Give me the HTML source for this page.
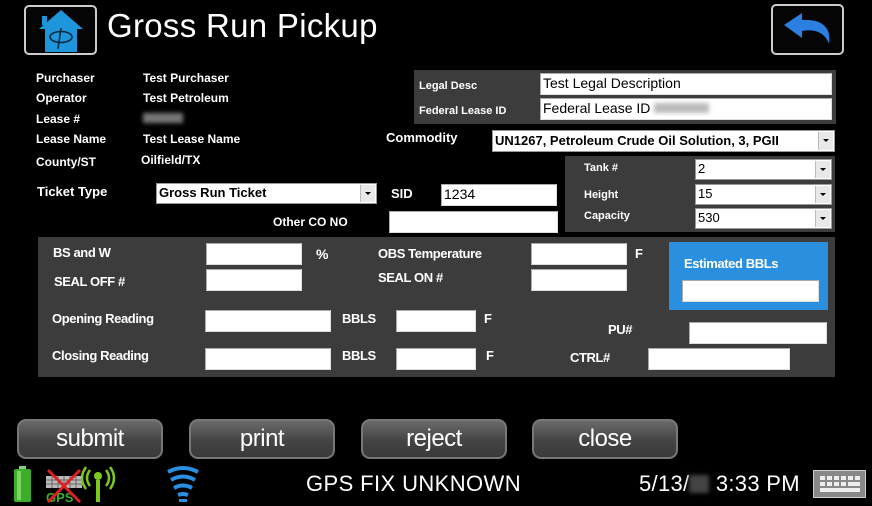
<!DOCTYPE html>
<html><head><meta charset="utf-8"><style>
*{margin:0;padding:0;box-sizing:border-box}
body{width:872px;height:506px;background:#000;position:relative;overflow:hidden;font-family:"Liberation Sans",Arial,sans-serif;color:#fff}
.a{position:absolute}
.l{position:absolute;font-weight:bold;font-size:12px;line-height:14px;white-space:nowrap}
.n{position:absolute;font-weight:bold;font-size:13px;line-height:15px;white-space:nowrap;letter-spacing:-0.4px}
.in{position:absolute;background:#fff;border:1px solid #aaa;border-right-color:#ddd;border-bottom-color:#ddd;color:#000;font-size:13px;line-height:19px;padding-left:2px;white-space:nowrap;overflow:hidden}
.sel{position:absolute;background:#fff;border:1px solid #999;color:#000;font-size:13px;line-height:18px;padding-left:2px;white-space:nowrap;overflow:hidden}
.sel:after{content:"";position:absolute;right:1px;top:1px;bottom:1px;width:14px;background:#e8e8e8;border-left:1px solid #bbb}
.sel i{position:absolute;right:5px;top:8px;width:0;height:0;border-left:3px solid transparent;border-right:3px solid transparent;border-top:3px solid #000;z-index:2}
.btn{position:absolute;top:419px;width:146px;height:40px;border-radius:9px;border:2px solid #777;background:linear-gradient(#6a6a6a,#444 55%,#3a3a3a);color:#fff;font-size:24px;text-align:center;line-height:36px;letter-spacing:-0.5px}
</style></head><body>
<!-- logo -->
<div class="a" style="left:24px;top:5px;width:73px;height:50px;border:2px solid #ccc;border-radius:5px;background:#050505"></div>
<svg class="a" style="left:36px;top:8px" width="50" height="46" viewBox="0 0 50 46">
<path d="M25 2 L47 21 L41 21 L41 44 L9 44 L9 21 L3 21 Z" fill="#1e96dc"/>
<rect x="6" y="8" width="5" height="9" fill="#1e96dc"/>
<ellipse cx="25" cy="29" rx="11" ry="5.5" fill="none" stroke="#062a44" stroke-width="1.6"/>
<path d="M25 20 L22 41" stroke="#062a44" stroke-width="1.6"/>
</svg>
<div class="a" style="left:107px;top:7px;font-size:33px;line-height:38px;letter-spacing:0.3px">Gross Run Pickup</div>
<!-- back -->
<div class="a" style="left:771px;top:4px;width:73px;height:51px;border:2px solid #ccc;border-radius:5px;background:#050505"></div>
<svg class="a" style="left:780px;top:10px" width="56" height="38" viewBox="0 0 56 38">
<path d="M4 15 L22 3 L22 10 C40 9 52 16 49 34 C45 22 34 19 22 21 L22 28 Z" fill="#2a7fe0"/>
</svg>
<!-- info -->
<div class="l" style="left:36px;top:71px">Purchaser</div><div class="l" style="left:143px;top:71px">Test Purchaser</div>
<div class="l" style="left:36px;top:91px">Operator</div><div class="l" style="left:143px;top:91px">Test Petroleum</div>
<div class="l" style="left:36px;top:112px">Lease #</div><div class="a" style="left:143px;top:113px;width:40px;height:10px;background:#777;filter:blur(2px)"></div>
<div class="l" style="left:36px;top:132px">Lease Name</div><div class="l" style="left:143px;top:132px">Test Lease Name</div>
<div class="l" style="left:36px;top:155px">County/ST</div><div class="l" style="left:141px;top:153px">Oilfield/TX</div>
<!-- legal -->
<div class="a" style="left:414px;top:70px;width:422px;height:54px;background:#3c3c3c"></div>
<div class="l" style="left:419px;top:79px;font-size:11px">Legal Desc</div>
<div class="l" style="left:419px;top:104px;font-size:11px">Federal Lease ID</div>
<div class="in" style="left:540px;top:73px;width:292px;height:22px;font-size:14px">Test Legal Description</div>
<div class="in" style="left:540px;top:98px;width:292px;height:22px;font-size:14px">Federal Lease ID <span style="display:inline-block;width:55px;height:10px;background:#bbb;filter:blur(2px)"></span></div>
<div class="l" style="left:386px;top:131px;font-size:13px">Commodity</div>
<div class="sel" style="left:492px;top:130px;width:343px;height:22px;font-weight:bold;line-height:20px">UN1267, Petroleum Crude Oil Solution, 3, PGII<i></i></div>
<!-- tank -->
<div class="a" style="left:565px;top:156px;width:270px;height:76px;background:#3c3c3c"></div>
<div class="l" style="left:584px;top:161px;font-size:11px">Tank #</div>
<div class="l" style="left:584px;top:188px;font-size:11px">Height</div>
<div class="l" style="left:584px;top:209px;font-size:11px">Capacity</div>
<div class="sel" style="left:695px;top:159px;width:137px;height:21px">2<i></i></div>
<div class="sel" style="left:695px;top:184px;width:137px;height:21px">15<i></i></div>
<div class="sel" style="left:695px;top:208px;width:137px;height:21px">530<i></i></div>
<!-- ticket -->
<div class="l" style="left:37px;top:185px;font-size:13px">Ticket Type</div>
<div class="sel" style="left:156px;top:183px;width:221px;height:21px;font-weight:bold">Gross Run Ticket<i></i></div>
<div class="l" style="left:391px;top:187px;font-size:13px">SID</div>
<div class="in" style="left:441px;top:184px;width:116px;height:22px;font-size:14px">1234</div>
<div class="l" style="left:273px;top:215px">Other CO NO</div>
<div class="in" style="left:389px;top:211px;width:169px;height:22px"></div>
<!-- lower panel -->
<div class="a" style="left:38px;top:237px;width:797px;height:140px;background:#3c3c3c"></div>
<div class="n" style="left:53px;top:245px">BS and W</div>
<div class="in" style="left:206px;top:243px;width:96px;height:22px"></div>
<div class="n" style="left:316px;top:247px;font-size:14px">%</div>
<div class="n" style="left:378px;top:246px">OBS Temperature</div>
<div class="in" style="left:531px;top:243px;width:96px;height:22px"></div>
<div class="n" style="left:635px;top:246px">F</div>
<div class="n" style="left:54px;top:274px">SEAL OFF #</div>
<div class="in" style="left:206px;top:269px;width:96px;height:22px"></div>
<div class="n" style="left:378px;top:270px">SEAL ON #</div>
<div class="in" style="left:531px;top:269px;width:96px;height:22px"></div>
<div class="a" style="left:669px;top:242px;width:159px;height:68px;background:#2b8fe0"></div>
<div class="n" style="left:684px;top:256px">Estimated BBLs</div>
<div class="in" style="left:682px;top:280px;width:137px;height:22px"></div>
<div class="n" style="left:52px;top:311px">Opening Reading</div>
<div class="in" style="left:205px;top:310px;width:126px;height:22px"></div>
<div class="n" style="left:342px;top:311px">BBLS</div>
<div class="in" style="left:396px;top:310px;width:80px;height:22px"></div>
<div class="n" style="left:484px;top:311px">F</div>
<div class="n" style="left:608px;top:322px">PU#</div>
<div class="in" style="left:689px;top:322px;width:138px;height:22px"></div>
<div class="n" style="left:52px;top:348px">Closing Reading</div>
<div class="in" style="left:205px;top:348px;width:126px;height:22px"></div>
<div class="n" style="left:342px;top:348px">BBLS</div>
<div class="in" style="left:396px;top:348px;width:80px;height:22px"></div>
<div class="n" style="left:486px;top:348px">F</div>
<div class="n" style="left:570px;top:350px">CTRL#</div>
<div class="in" style="left:648px;top:348px;width:142px;height:22px"></div>
<!-- buttons -->
<div class="btn" style="left:17px">submit</div>
<div class="btn" style="left:189px">print</div>
<div class="btn" style="left:361px">reject</div>
<div class="btn" style="left:532px">close</div>
<!-- status -->
<svg class="a" style="left:10px;top:466px" width="200" height="38" viewBox="0 0 200 38">
<rect x="9" y="0" width="7" height="4" fill="#8c8"/>
<rect x="4" y="3" width="17" height="33" rx="2" fill="#3cae2a"/>
<rect x="7" y="5" width="4" height="29" fill="#7ed36a"/>
<rect x="36" y="10" width="36" height="12" fill="#bbb"/>
<path d="M36 14H72M36 18H72M42 10V22M48 10V22M54 10V22M60 10V22M66 10V22" stroke="#666" stroke-width="1"/>
<text x="36" y="36" font-family="Liberation Sans" font-weight="bold" font-size="13" fill="#3cae2a">GPS</text>
<path d="M38 4L70 36M70 4L38 36" stroke="#e02020" stroke-width="3"/>
<path d="M88 14V36" stroke="#7cc820" stroke-width="4"/><circle cx="88" cy="10" r="4" fill="#7cc820"/>
<path d="M80 4Q74 12 80 20M96 4Q102 12 96 20M76 1Q68 12 76 23M100 1Q108 12 100 23" stroke="#7cc820" stroke-width="2.5" fill="none"/>
<path d="M158 6Q173 -2 188 6" stroke="#2a8fe0" stroke-width="4" fill="none"/>
<path d="M161 14Q173 7 185 14" stroke="#2a8fe0" stroke-width="4" fill="none"/>
<path d="M164 22Q173 17 182 22" stroke="#2a8fe0" stroke-width="4" fill="none"/>
<path d="M168 29Q173 27 178 29" stroke="#2a8fe0" stroke-width="4" fill="none"/>
<rect x="169" y="33" width="8" height="3" fill="#2a8fe0"/>
</svg>
<div class="a" style="left:306px;top:471px;font-size:22px;line-height:26px;letter-spacing:0.4px">GPS FIX UNKNOWN</div>
<div class="a" style="left:639px;top:471px;font-size:22px;line-height:26px;letter-spacing:0.3px">5/13/<span style="display:inline-block;width:20px;height:18px;background:#444;filter:blur(2px);vertical-align:-2px"></span> 3:33 PM</div>
<div class="a" style="left:813px;top:470px;width:53px;height:28px;background:#888;border:1px solid #ccc"></div>
<svg class="a" style="left:818px;top:474px" width="44" height="20" viewBox="0 0 44 20">
<g fill="#eee"><rect x="2" y="2" width="5" height="4"/><rect x="9" y="2" width="5" height="4"/><rect x="16" y="2" width="5" height="4"/><rect x="23" y="2" width="5" height="4"/><rect x="30" y="2" width="5" height="4"/><rect x="37" y="2" width="5" height="4"/>
<rect x="2" y="8" width="5" height="4"/><rect x="9" y="8" width="5" height="4"/><rect x="16" y="8" width="5" height="4"/><rect x="23" y="8" width="5" height="4"/><rect x="30" y="8" width="12" height="4"/>
<rect x="2" y="14" width="40" height="4"/></g></svg>
</body></html>
